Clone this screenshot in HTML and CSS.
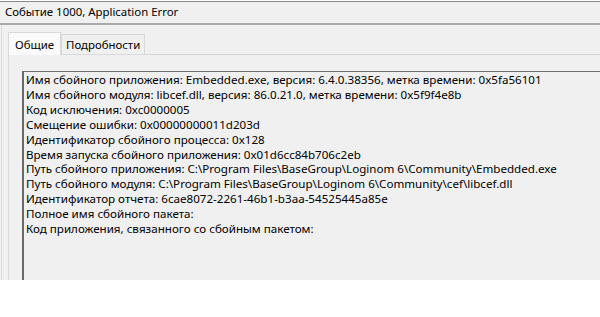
FILE: index.html
```html
<!DOCTYPE html>
<html lang="ru">
<head>
    <meta charset="UTF-8">
    <title>Событие 1000, Application Error</title>
    <link rel="stylesheet" href="styles.css">
</head>
<body>
    <div class="window">
        <div class="title">Событие 1000, Application Error</div>
        <div class="content">
            <div class="tabs">
                <div class="tab active">Общие</div>
                <div class="tab">Подробности</div>
            </div>
            <div class="panel">
                <div class="details">
                    <div>Имя сбойного приложения: Embedded.exe, версия: 6.4.0.38356, метка времени: 0x5fa56101</div>
                    <div>Имя сбойного модуля: libcef.dll, версия: 86.0.21.0, метка времени: 0x5f9f4e8b</div>
                    <div>Код исключения: 0xc0000005</div>
                    <div>Смещение ошибки: 0x00000000011d203d</div>
                    <div>Идентификатор сбойного процесса: 0x128</div>
                    <div>Время запуска сбойного приложения: 0x01d6cc84b706c2eb</div>
                    <div>Путь сбойного приложения: C:\Program Files\BaseGroup\Loginom 6\Community\Embedded.exe</div>
                    <div>Путь сбойного модуля: C:\Program Files\BaseGroup\Loginom 6\Community\cef\libcef.dll</div>
                    <div>Идентификатор отчета: 6cae8072-2261-46b1-b3aa-54525445a85e</div>
                    <div>Полное имя сбойного пакета:</div>
                    <div>Код приложения, связанного со сбойным пакетом:</div>
                </div>
            </div>
        </div>
    </div>
</body>
</html>
```

FILE: styles.css
```css
body {
    margin: 0;
    background: #fff;
    font-family: "Noto Sans", "Open Sans", sans-serif;
    color: #000;
    overflow: hidden;
}
.window {
    height: 278px;
    background: #f0f0f0;
    border-top: 1px solid #8a8a8a;
    margin-top: 1px;
    overflow: hidden;
}
.title {
    height: 21px;
    line-height: 20px;
    padding-left: 5px;
    font-size: 11.4px;
    border-bottom: 2px solid #a9a9a9;
}
.content {
    border-left: 1px solid #dcdcdc;
    margin-left: 1px;
    height: 100%;
    padding-left: 6px;
}
.tabs {
    display: flex;
    align-items: flex-end;
    height: 29px;
}
.tab {
    font-size: 11.4px;
    height: 19px;
    line-height: 20px;
    padding: 0 4px;
    border: 1px solid #d9d9d9;
    border-bottom: none;
    background: #f0f0f0;
}
.tab.active {
    height: 22px;
    line-height: 23px;
    padding: 0 6px;
    background: #fafafa;
    margin-bottom: -1px;
    position: relative;
}
.panel {
    border-top: 1px solid #d9d9d9;
    border-left: 1px solid #d9d9d9;
    height: 100%;
    padding: 16px 0 0 13px;
}
.details {
    border-top: 1px solid #707070;
    border-left: 2px solid #6a6a6a;
    height: 100%;
    padding: 1px 0 0 2px;
    font-size: 11.6px;
    line-height: 14.9px;
    white-space: nowrap;
}
```
